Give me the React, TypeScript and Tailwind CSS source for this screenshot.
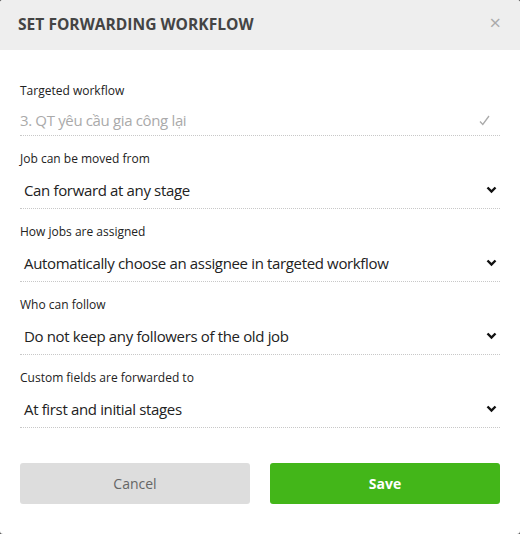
import React from "react";

const font = { fontFamily: '"Open Sans", "Noto Sans", sans-serif' };

function Chevron() {
  return (
    <svg width="11" height="8" viewBox="0 0 11 8" className="shrink-0">
      <path d="M1.5 1.5 L5.5 5.5 L9.5 1.5" fill="none" stroke="#111" strokeWidth="2.4" />
    </svg>
  );
}

function SelectField({ label, value }: { label: string; value: string }) {
  return (
    <div className="mt-[15px]">
      <div className="h-4 text-[12px] leading-4 font-medium text-[#222]">{label}</div>
      <div className="mt-[5px] h-[37px] flex items-center justify-between border-b border-dotted border-[#c8c8c8] pl-1 pr-[3px]">
        <span className="text-[15px] tracking-[-0.35px] text-[#222]">{value}</span>
        <Chevron />
      </div>
    </div>
  );
}

export default function App() {
  return (
    <div className="w-[520px] h-[534px] bg-[#555]" style={font}>
      <div className="h-full bg-white rounded-[3px] overflow-hidden flex flex-col">
        <div className="h-[50px] bg-[#eeeeee] flex items-center justify-between pl-[18px] pr-[19px]">
          <span className="text-[15.6px] font-bold text-[#444]">SET FORWARDING WORKFLOW</span>
          <span className="text-[#aaa] text-[20px] leading-none -mt-1">×</span>
        </div>
        <div className="px-5 pt-[33px]">
          <div>
            <div className="h-4 text-[12px] leading-4 font-medium text-[#222]">Targeted workflow</div>
            <div className="mt-[6px] h-[31px] flex items-center justify-between border-b border-dotted border-[#c8c8c8] pr-[10px]">
              <span className="text-[15px] tracking-[-0.35px] text-[#aaa]">3. QT yêu cầu gia công lại</span>
              <svg width="11" height="11" viewBox="0 0 11 11">
                <path d="M1 6.5 L3.8 9.5 L10 1" fill="none" stroke="#aaa" strokeWidth="1.3" />
              </svg>
            </div>
          </div>
          <SelectField label="Job can be moved from" value="Can forward at any stage" />
          <SelectField label="How jobs are assigned" value="Automatically choose an assignee in targeted workflow" />
          <SelectField label="Who can follow" value="Do not keep any followers of the old job" />
          <SelectField label="Custom fields are forwarded to" value="At first and initial stages" />
          <div className="mt-[35px] flex gap-5">
            <button className="flex-1 h-[41px] rounded-[3px] bg-[#dddddd] text-[14px] text-[#666]">Cancel</button>
            <button className="flex-1 h-[41px] rounded-[3px] bg-[#43b619] text-[14px] font-bold text-white">Save</button>
          </div>
        </div>
      </div>
    </div>
  );
}
